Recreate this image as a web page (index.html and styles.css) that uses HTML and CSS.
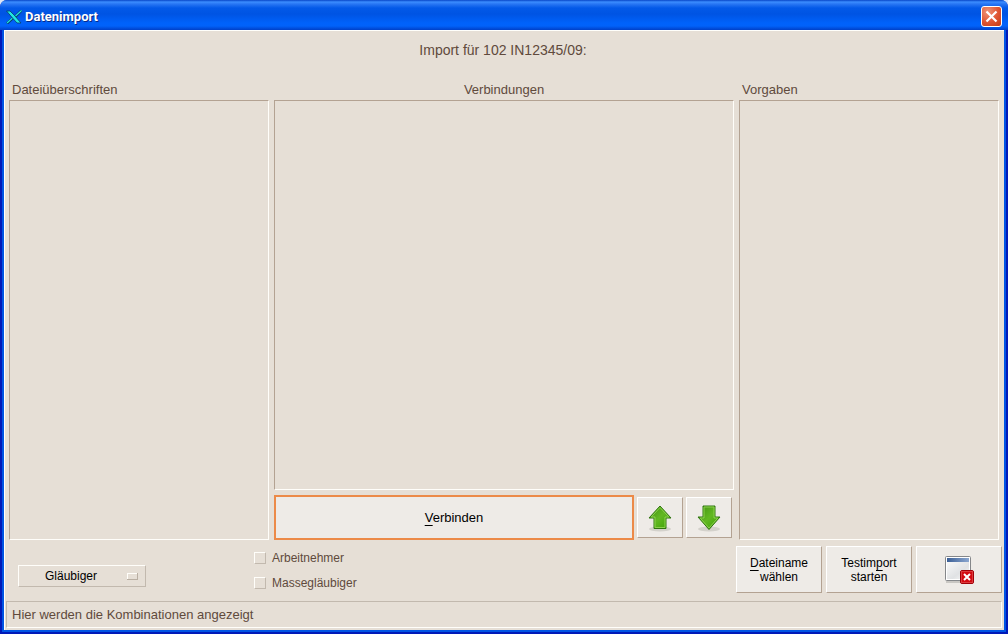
FILE: index.html
```
<!DOCTYPE html>
<html lang="de">
<head>
<meta charset="utf-8">
<title>Datenimport</title>
<link rel="stylesheet" href="styles.css">
</head>
<body>
<div class="window">
  <header class="titlebar">
    <svg class="logo" width="16" height="14" viewBox="0 0 16 14" aria-hidden="true">
      <path d="M15.500 0.500L9 7M7.500 7.500L1 13.500" stroke="#063c70" stroke-width="2.600"/>
      <path d="M15.500 0.500L9.500 6M6.500 8L1 13" stroke="#20e0dc" stroke-width="1.200"/>
      <path d="M0.500 1H4L9 6L15 13H11L6.500 8Z" fill="#20e8e0" stroke="#063c70" stroke-width=".8"/>
    </svg>
    <h1 class="title">Datenimport</h1>
    <button class="close" type="button" aria-label="Schließen">
      <svg width="13" height="13" viewBox="0 0 13 13"><path d="M1.500 1.500L11.500 11.500M11.500 1.500L1.500 11.500" stroke="#fff" stroke-width="2.200"/></svg>
    </button>
  </header>
  <main class="content">
    <h2 class="heading">Import für 102 IN12345/09:</h2>
    <div class="columns">
      <section class="column">
        <h3 class="label">Dateiüberschriften</h3>
        <div class="list"></div>
      </section>
      <section class="column">
        <h3 class="label label-center">Verbindungen</h3>
        <div class="list"></div>
        <div class="connect-row">
          <button class="button connect" type="button"><span class="key">V</span>erbinden</button>
          <button class="button arrow" type="button" aria-label="Nach oben">
            <svg width="26" height="28" viewBox="0 0 26 28">
              <defs><linearGradient id="green" x1="0" y1="0" x2="1" y2="1"><stop offset="0" stop-color="#3f8f12"/><stop offset=".5" stop-color="#62b822"/><stop offset="1" stop-color="#36a000"/></linearGradient></defs>
              <ellipse cx="13" cy="25" rx="11" ry="2.500" fill="#d3d1cb"/>
              <path d="M13 2L24 14H19V24.500H7V14H2Z" fill="url(#green)" stroke="#2f7410"/>
              <path d="M13 3.500L21.800 13H18V23.500H8V13H4.200Z" fill="none" stroke="#8cd04e"/>
            </svg>
          </button>
          <button class="button arrow" type="button" aria-label="Nach unten">
            <svg width="26" height="28" viewBox="0 0 26 28">
              <ellipse cx="13" cy="25" rx="11" ry="2.500" fill="#d3d1cb"/>
              <path d="M13 25.500L24 13H19V2H7V13H2Z" fill="url(#green)" stroke="#2f7410"/>
              <path d="M13 24L21.800 14H18V3H8V14H4.200Z" fill="none" stroke="#8cd04e"/>
            </svg>
          </button>
        </div>
      </section>
      <section class="column">
        <h3 class="label">Vorgaben</h3>
        <div class="list"></div>
      </section>
    </div>
    <div class="options">
      <div class="select-wrap">
        <select class="select" aria-label="Art">
          <option>Gläubiger</option>
        </select>
      </div>
      <div class="checks">
        <label class="check"><input class="box" type="checkbox">Arbeitnehmer</label>
        <label class="check"><input class="box" type="checkbox">Massegläubiger</label>
      </div>
      <div class="actions">
        <button class="button action" type="button"><span class="key">D</span>ateiname<br>wählen</button>
        <button class="button action" type="button">Testim<span class="key">p</span>ort<br>starten</button>
        <button class="button action" type="button" aria-label="Fenster schließen">
          <svg class="action-icon" width="30" height="28" viewBox="0 0 30 28">
            <defs>
              <linearGradient id="bar" x1="0" x2="1"><stop offset="0" stop-color="#3b5f96"/><stop offset="1" stop-color="#8ba7d0"/></linearGradient>
              <linearGradient id="pane" x1="0" y1="0" x2="1" y2="1"><stop offset="0" stop-color="#f8f8f8"/><stop offset=".6" stop-color="#e0e2e4"/><stop offset="1" stop-color="#fafafa"/></linearGradient>
            </defs>
            <path d="M2 26H17" stroke="#c9c7c3" stroke-width="2"/>
            <rect x="1.500" y="0.500" width="25" height="24" rx="1" fill="#fff" stroke="#85878a"/>
            <rect x="3" y="2" width="22" height="4" fill="url(#bar)"/>
            <rect x="3" y="6" width="22" height="17" fill="url(#pane)"/>
            <rect x="16.500" y="14.500" width="13" height="13" rx="1.500" fill="#d40a12" stroke="#a00008"/>
            <rect x="17.500" y="15.500" width="11" height="11" fill="none" stroke="#dc3a3c"/>
            <path d="M20 18L26 24M26 18L20 24" stroke="#fff" stroke-width="2"/>
          </svg>
        </button>
      </div>
    </div>
    <footer class="status">Hier werden die Kombinationen angezeigt</footer>
  </main>
</div>
</body>
</html>
```
FILE: styles.css
```
* {
  box-sizing: border-box;
}

body {
  margin: 0;
  background: #dfe6f5;
  color: #604a3c;
  font: 12px/16px "Liberation Sans", Arial, sans-serif;
}

h1,
h2,
h3 {
  margin: 0;
  font-weight: normal;
}

button,
select {
  margin: 0;
  padding: 0;
  color: #000;
  font: inherit;
}

.window {
  display: flex;
  flex-direction: column;
  min-height: 100vh;
  padding: 0 4px 4px;
  border-radius: 7px 7px 0 0;
  background: linear-gradient(#0054e3, #0054e3) 2px 0 / calc(100% - 4px) calc(100% - 2px) no-repeat, #0019b8;
  overflow: hidden;
}

.titlebar {
  display: flex;
  align-items: center;
  height: 30px;
  margin: 0 -4px;
  padding: 3px 6px 0;
  background: linear-gradient(#0846c8 0, #3b8dff 2px, #2876f4 4px, #0359e8 8px, #0054e3 14px, #0062fb 23px, #0162fa 26px, #0040c8 30px);
}

.title {
  flex: 1;
  margin-left: 3px;
  color: #fff;
  font: bold 13px/16px Roboto, "Open Sans", sans-serif;
  text-shadow: 1px 1px #0a2a88;
}

.close {
  display: grid;
  place-items: center;
  width: 21px;
  height: 21px;
  border: 1px solid #fff;
  border-radius: 3px;
  background: radial-gradient(circle at 30% 25%, #ee9478, #df5532 55%, #c13c14);
}

.content {
  display: flex;
  flex: 1;
  flex-direction: column;
  border: solid #fffffb;
  border-width: 1px 0 0 1px;
  background: #e6dfd6;
}

.heading {
  padding: 10px 3px 12px 0;
  font-size: 14px;
  line-height: 18px;
  text-align: center;
}

.columns {
  display: grid;
  flex: 1;
  grid-template-columns: 260fr 460fr 260fr;
  gap: 5px;
  margin: 11px 5px 6px 4px;
}

.column {
  display: flex;
  flex-direction: column;
}

.label {
  height: 18px;
  padding-left: 3px;
  font-size: 13px;
}

.label-center {
  padding: 0;
  text-align: center;
}

.list {
  flex: 1;
  border: 1px solid;
  border-color: #b3a292 #fffefa #fffefa #b3a292;
}

.button {
  border: 1px solid;
  border-color: #fff #b3a292 #b3a292 #fff;
  background: #eeebe7;
  line-height: 14px;
}

.connect-row {
  display: flex;
  align-items: center;
  gap: 3px;
  margin-top: 5px;
  padding-right: 2px;
}

.connect {
  flex: 1;
  height: 45px;
  border: 2px solid #ec8a48;
  font-size: 13px;
}

.arrow {
  display: grid;
  place-items: center;
  width: 46px;
  height: 41px;
}

.key {
  text-decoration: underline;
  text-decoration-thickness: 1px;
  text-underline-offset: 3px;
  text-decoration-skip-ink: none;
}

.options {
  display: grid;
  grid-template-columns: 249px 1fr auto;
  padding-right: 2px;
}

.select-wrap {
  padding: 19px 13px 0;
}

.select {
  width: 128px;
  height: 22px;
  padding-left: 26px;
  appearance: none;
  border: 1px solid;
  border-color: #fffefa #c2b9ae #c2b9ae #fffefa;
  border-radius: 0;
  background:
    linear-gradient(#e6dfd6, #e6dfd6) 109px 8px / 9px 5px no-repeat,
    linear-gradient(#fffefa, #fffefa) 108px 7px / 10px 6px no-repeat,
    linear-gradient(#b9afa3, #b9afa3) 108px 7px / 11px 7px no-repeat,
    #e6dfd6;
}

.checks {
  display: flex;
  flex-direction: column;
  gap: 9px;
  padding-top: 4px;
}

.check {
  display: flex;
  align-items: center;
  gap: 6px;
}

.box {
  width: 12px;
  height: 12px;
  margin: 0;
  appearance: none;
  border: 1px solid;
  border-color: #fffefa #c2b9ae #c2b9ae #fffefa;
}

.actions {
  display: flex;
  gap: 4px;
}

.action {
  width: 86px;
  height: 47px;
}

.action-icon {
  display: block;
  margin: 0 auto;
}

.status {
  margin: 8px 2px 2px 1px;
  padding: 5px;
  border: 1px solid;
  border-color: #c2b9ae #fffefa #fffefa #c2b9ae;
  font-size: 13px;
  line-height: 15px;
}
```
